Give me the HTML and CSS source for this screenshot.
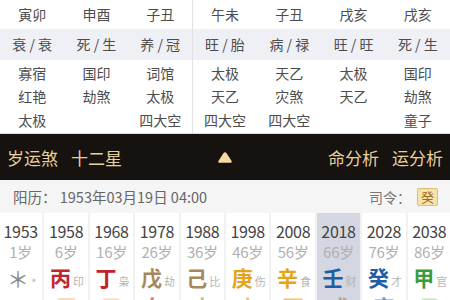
FILE: index.html
```html
<!DOCTYPE html>
<html lang="zh">
<head>
<meta charset="utf-8">
<link rel="stylesheet" href="styles.css">
</head>
<body>
<div class="page">
  <div class="table">
    <div class="row r1">
      <div class="cell">寅卯</div><div class="cell">申酉</div><div class="cell sep">子丑</div>
      <div class="cell">午未</div><div class="cell">子丑</div><div class="cell">戌亥</div><div class="cell">戌亥</div>
    </div>
    <div class="row r2">
      <div class="cell">衰 / 衰</div><div class="cell">死 / 生</div><div class="cell sep">养 / 冠</div>
      <div class="cell">旺 / 胎</div><div class="cell">病 / 禄</div><div class="cell">旺 / 旺</div><div class="cell">死 / 生</div>
    </div>
    <div class="row r3">
      <div class="cell">寡宿<br>红艳<br>太极</div>
      <div class="cell">国印<br>劫煞</div>
      <div class="cell sep">词馆<br>太极<br>四大空</div>
      <div class="cell">太极<br>天乙<br>四大空</div>
      <div class="cell">天乙<br>灾煞<br>四大空</div>
      <div class="cell">太极<br>天乙</div>
      <div class="cell">国印<br>劫煞<br>童子</div>
    </div>
  </div>

  <div class="bar">
    <div class="bar-left"><span>岁运煞</span><span>十二星</span></div>
    <div class="bar-mid">
      <svg width="16" height="13" viewBox="0 0 16 13"><path d="M8 1.2 Q8.9 1.2 9.6 2.3 L14.6 10 Q15.4 11.6 13.8 11.8 L2.2 11.8 Q0.6 11.6 1.4 10 L6.4 2.3 Q7.1 1.2 8 1.2 Z" fill="#f5dba2"/></svg>
    </div>
    <div class="bar-right"><span>命分析</span><span>运分析</span></div>
  </div>

  <div class="info">
    <div class="date">阳历： 1953年03月19日 04:00</div>
    <div class="siling">司令：<span class="badge">癸</span></div>
  </div>

  <div class="yun">
    <div class="col">
      <div class="year">1953</div><div class="age">1岁</div>
      <div class="stem"><span class="g c-gray">＊</span><span class="s">*</span></div>
      <div class="br"></div>
    </div>
    <div class="col">
      <div class="year">1958</div><div class="age">6岁</div>
      <div class="stem"><span class="g c-red">丙</span><span class="s">印</span></div>
      <div class="br c-lo">辰</div>
    </div>
    <div class="col">
      <div class="year">1968</div><div class="age">16岁</div>
      <div class="stem"><span class="g c-red">丁</span><span class="s">枭</span></div>
      <div class="br c-lo">巳</div>
    </div>
    <div class="col">
      <div class="year">1978</div><div class="age">26岁</div>
      <div class="stem"><span class="g c-tan">戊</span><span class="s">劫</span></div>
      <div class="br c-red">午</div>
    </div>
    <div class="col">
      <div class="year">1988</div><div class="age">36岁</div>
      <div class="stem"><span class="g c-tan">己</span><span class="s">比</span></div>
      <div class="br c-tan">未</div>
    </div>
    <div class="col">
      <div class="year">1998</div><div class="age">46岁</div>
      <div class="stem"><span class="g c-gold">庚</span><span class="s">伤</span></div>
      <div class="br c-gold">申</div>
    </div>
    <div class="col">
      <div class="year">2008</div><div class="age">56岁</div>
      <div class="stem"><span class="g c-gold">辛</span><span class="s">食</span></div>
      <div class="br c-gold">酉</div>
    </div>
    <div class="col cur">
      <div class="year">2018</div><div class="age">66岁</div>
      <div class="stem"><span class="g c-blue">壬</span><span class="s">财</span></div>
      <div class="br c-tan">戌</div>
    </div>
    <div class="col">
      <div class="year">2028</div><div class="age">76岁</div>
      <div class="stem"><span class="g c-blue">癸</span><span class="s">才</span></div>
      <div class="br c-blue">亥</div>
    </div>
    <div class="col">
      <div class="year">2038</div><div class="age">86岁</div>
      <div class="stem"><span class="g c-green">甲</span><span class="s">官</span></div>
      <div class="br c-lg">子</div>
    </div>
  </div>
</div>
</body>
</html>
```

FILE: styles.css
```css
* { box-sizing: border-box; }
html, body { margin: 0; padding: 0; }
body {
  width: 450px;
  height: 300px;
  overflow: hidden;
  background: #fff;
  font-family: "Noto Sans CJK SC", "Noto Sans", sans-serif;
  color: #4d4d4d;
}
.page { width: 450px; height: 300px; overflow: hidden; }

.table { border-bottom: 1px solid #dcdcdc; }
.row {
  display: grid;
  grid-template-columns: repeat(7, 1fr);
  font-size: 14px;
  text-align: center;
}
.cell { white-space: nowrap; }
.cell.sep { border-right: 1px solid #e2e2e2; }
.r1 .cell { height: 29px; line-height: 29px; }
.r2 { background: #eef0f6; }
.r2 .cell { height: 31px; line-height: 31px; }
.r3 .cell { padding: 2px 0 1px; line-height: 23.3px; height: 73px; }

.bar {
  height: 46px;
  background: #15120f;
  display: grid;
  grid-template-columns: 1fr auto 1fr;
  align-items: center;
  padding: 0 7px;
  color: #e8cf9e;
  font-size: 17px;
}
.bar-left, .bar-right { display: flex; gap: 13px; }
.bar-right { justify-content: flex-end; }
.bar-mid { display: flex; align-items: center; justify-content: center; }
.bar-mid svg { display: block; }

.info {
  height: 33px;
  background: #f5f5f5;
  display: flex;
  align-items: center;
  justify-content: space-between;
  padding: 0 12px 0 13px;
  font-size: 14.5px;
  color: #666;
}
.siling { display: flex; align-items: center; color: #777; font-size: 14px; }
.badge {
  display: inline-block;
  width: 21px;
  height: 18px;
  line-height: 16px;
  text-align: center;
  font-size: 13px;
  background: #f7e2ab;
  border: 1px solid #dcc07a;
  border-radius: 2px;
  color: #9a6c22;
  margin-left: 6px;
}

.yun {
  display: grid;
  grid-template-columns: repeat(10, 1fr);
  column-gap: 2px;
  background: #f2f2f2;
  height: 120px;
  margin-left: -1px;
  margin-right: -1px;
}
.col {
  background: #fff;
  text-align: center;
  padding-top: 8px;
}
.col.cur { background: #d4d7e1; }
.year { font-size: 16px; line-height: 20px; color: #444; letter-spacing: -0.3px; }
.age { font-size: 15px; line-height: 22px; color: #b0b0b0; letter-spacing: -0.3px; }
.stem {
  height: 28px;
  line-height: 28px;
  display: flex;
  justify-content: center;
  align-items: baseline;
  padding-left: 2px;
}
.stem .g { font-size: 21px; font-weight: 700; }
.stem .s { font-size: 11px; color: #b5b5b5; margin-left: 2px; }
.stem .c-gray { color: #8a8a8a; font-weight: 400; font-size: 22px; }
.br { font-size: 21px; font-weight: 700; line-height: 26px; margin-top: 2px; opacity: 0.6; }
.c-red { color: #c3232b; }
.c-tan { color: #a8885a; }
.c-gold { color: #e6a31c; }
.c-blue { color: #1f5da6; }
.c-green { color: #3a9b3e; }
.c-lo { color: #f2c78a; }
.c-lg { color: #9fd3a2; }
```
